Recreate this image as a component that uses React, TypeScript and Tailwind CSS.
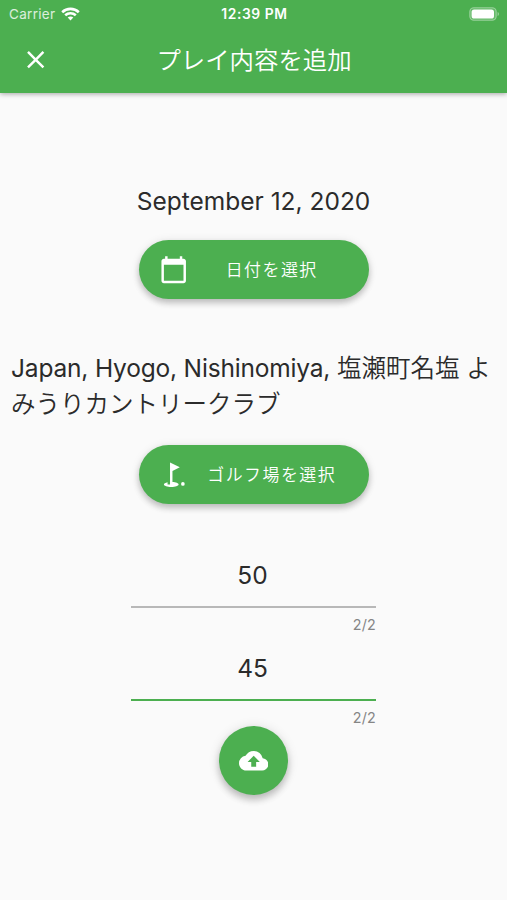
import type { ReactNode } from "react";
import { MdBackup, MdCalendarToday, MdClose, MdGolfCourse } from "react-icons/md";

function StatusBar() {
  return (
    <div className="grid h-7 grid-cols-3 items-center pr-[7px] pl-[9px] text-[13.5px] leading-none">
      <div className="flex items-center gap-1.5 text-white/80">
        <span className="pt-px tracking-[0.3px]">Carrier</span>
        <svg width="19" height="14" viewBox="0 0 19 14" className="shrink-0" fill="none" stroke="#fff" strokeWidth="2.6">
          <path d="M1.2 5.2C5.8 .8 13.2 .8 17.8 5.2" />
          <path d="M4.2 8.3c3-2.8 7.6-2.8 10.6 0" />
          <path d="M6.7 10.6c1.6-1.5 4-1.5 5.6 0L9.5 13.5z" fill="#fff" stroke="none" />
        </svg>
      </div>
      <div className="pt-[2px] text-center text-[13.8px] font-semibold tracking-[0.6px] whitespace-nowrap">12:39 PM</div>
      <svg width="31" height="14" viewBox="0 0 31 14" className="justify-self-end">
        <rect x=".8" y=".8" width="26.4" height="12.4" rx="4" fill="#fff" fillOpacity=".15" stroke="#fff" strokeOpacity=".4" strokeWidth="1.1" />
        <rect x="2.6" y="2.4" width="22.4" height="9.2" rx="2.6" fill="#fff" />
        <path d="M28.6 5c1.8.6 1.8 3.4 0 4z" fill="#fff" fillOpacity=".45" />
      </svg>
    </div>
  );
}

function PillButton({ icon, children }: { icon: ReactNode; children: ReactNode }) {
  return (
    <button className="flex h-[59px] w-[230px] items-center rounded-full bg-[#4caf50] pl-5 text-white shadow-[0_4px_6px_rgba(0,0,0,0.2),0_1px_10px_rgba(0,0,0,0.1)]">
      {icon}
      <span className="flex-1 pt-[3px] pr-[13px] text-center text-[16.9px] font-[350] tracking-[1.5px]">{children}</span>
    </button>
  );
}

function ScoreField({ value, active = false }: { value: string; active?: boolean }) {
  return (
    <div className="h-[93px] w-[245px]">
      <div className={`flex h-[51px] items-start justify-center border-b-2 pt-[3px] pr-[2px] text-[24.5px] leading-[30px] ${active ? "border-[#4caf50]" : "border-[#b8b8b8]"}`}>
        {value}
      </div>
      <div className="pt-[8px] text-right text-[14.3px] leading-[18px] tracking-[0.2px] text-[#858585]">2/2</div>
    </div>
  );
}

export default function App() {
  return (
    <div className="flex h-[900px] w-[507px] flex-col overflow-hidden bg-[#fafafa] font-['Inter','Noto_Sans_CJK_JP',sans-serif] text-[#2b2b2b]">
      <header className="h-[93px] shrink-0 bg-[#4caf50] text-white shadow-[0_1px_5px_rgba(0,0,0,0.35)]">
        <StatusBar />
        <div className="grid h-16 grid-cols-[71px_1fr_71px] items-center">
          <MdClose size={29.4} className="justify-self-center" />
          <h1 className="pt-px pl-px text-center text-[24.4px] leading-none font-[350]">プレイ内容を追加</h1>
        </div>
      </header>
      <main className="flex flex-col items-center">
        <p className="mt-[90px] text-[24.5px] leading-9">September 12, 2020</p>
        <div className="mt-[21px]">
          <PillButton icon={<MdCalendarToday size={29.4} />}>日付を選択</PillButton>
        </div>
        <p className="mt-[51px] w-full px-[11px] text-[24.5px] leading-[36px] font-[350]">
          <span className="font-normal tracking-[-0.18px]">Japan, Hyogo, Nishinomiya, </span>
          塩瀬町名塩 よみうりカントリークラブ
        </p>
        <div className="mt-[23px]">
          <PillButton icon={<MdGolfCourse size={29.4} />}>ゴルフ場を選択</PillButton>
        </div>
        <div className="mt-[53px]">
          <ScoreField value="50" />
          <ScoreField value="45" active />
        </div>
        <button className="-mt-[17px] flex size-[69px] items-center justify-center rounded-full bg-[#4caf50] text-white shadow-[0_5px_7px_rgba(0,0,0,0.2),0_1px_12px_rgba(0,0,0,0.12)]">
          <MdBackup size={29.4} />
        </button>
      </main>
    </div>
  );
}
